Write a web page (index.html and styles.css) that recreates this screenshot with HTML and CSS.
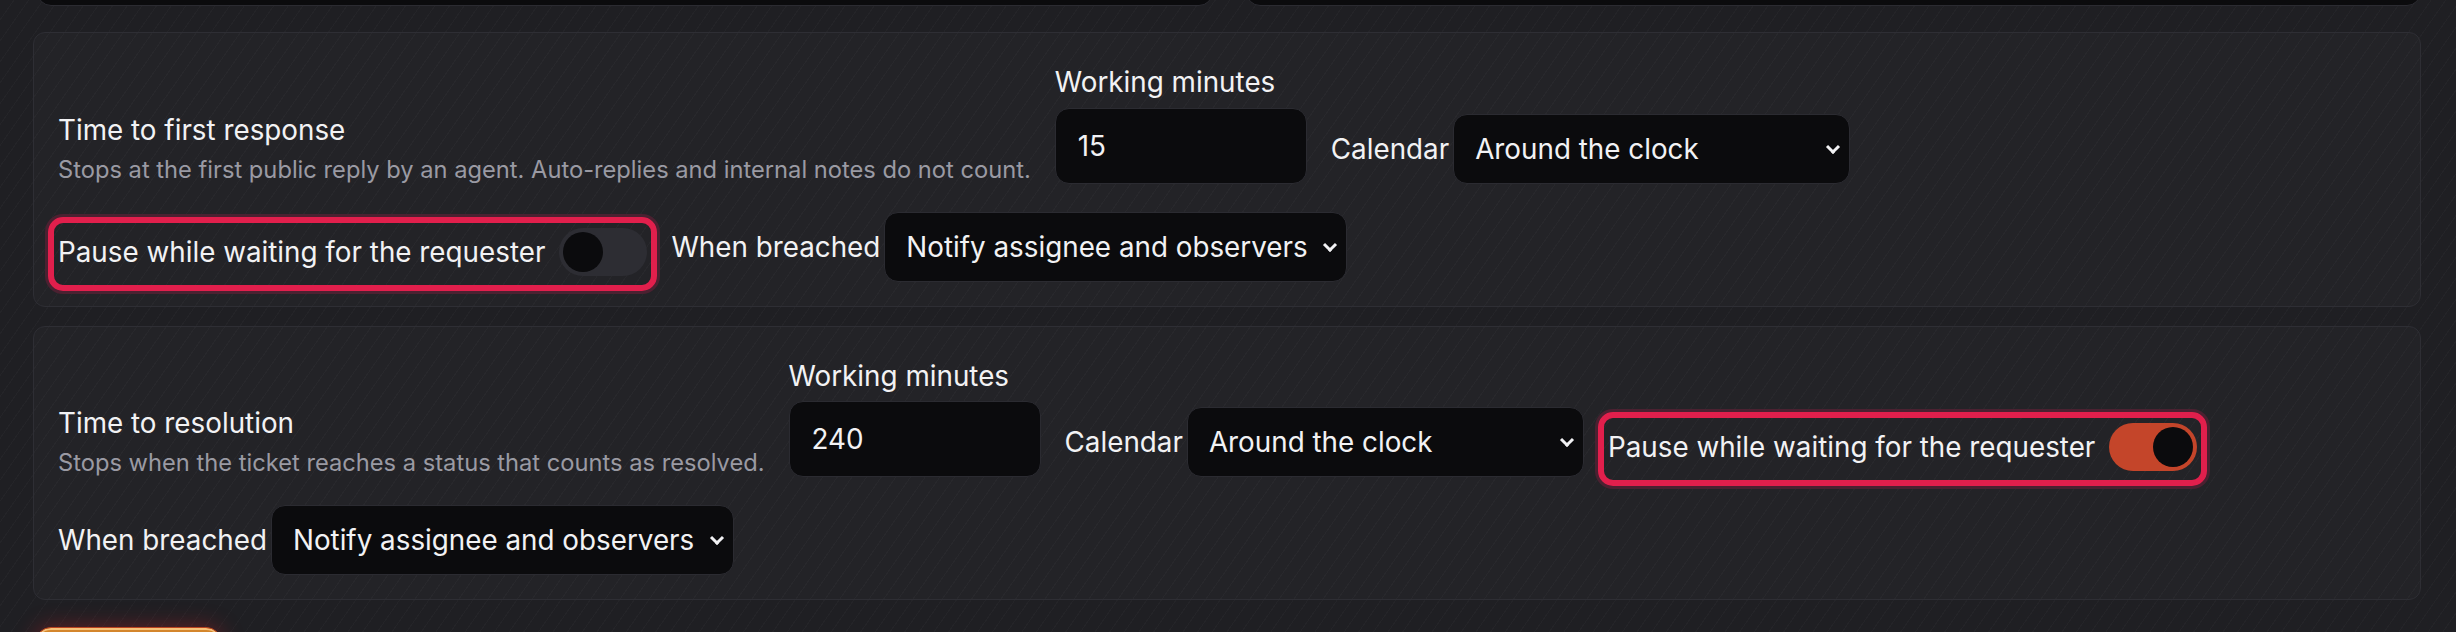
FILE: index.html
```html
<!DOCTYPE html>
<html lang="en">
<head>
  <meta charset="UTF-8" />
  <meta name="viewport" content="width=device-width, initial-scale=1.0"/>
  <title>SLA targets</title>
  <link rel="stylesheet" href="styles.css">
</head>
<body>

  <!-- Policy fields from the section above -->
  <div class="policy-fields">
    <div class="dark-field"></div>
    <div class="dark-field"></div>
  </div>

  <div class="sla-list">

    <!-- First response target -->
    <section class="sla-card">
      <div class="sla-row">
        <div class="sla-info">
          <h3 class="sla-title">Time to first response</h3>
          <p class="sla-desc">Stops at the first public reply by an agent. Auto-replies and internal notes do not count.</p>
        </div>

        <div class="field">
          <label class="field-label" for="firstMinutes">Working minutes</label>
          <input class="text-input" id="firstMinutes" type="text" value="15" />
        </div>

        <div class="inline-field">
          <label for="firstCalendar">Calendar</label>
          <span class="select-wrap">
            <select class="select-calendar" id="firstCalendar">
              <option>Around the clock</option>
              <option>Business hours</option>
            </select>
          </span>
        </div>

        <label class="pause-toggle highlight">
          Pause while waiting for the requester
          <input class="switch" type="checkbox" />
        </label>

        <div class="inline-field">
          <label for="firstBreach">When breached</label>
          <span class="select-wrap">
            <select class="select-breach" id="firstBreach">
              <option>Notify assignee and observers</option>
              <option>Notify assignee</option>
              <option>Escalate to team lead</option>
            </select>
          </span>
        </div>
      </div>
    </section>

    <!-- Resolution target -->
    <section class="sla-card">
      <div class="sla-row">
        <div class="sla-info">
          <h3 class="sla-title">Time to resolution</h3>
          <p class="sla-desc">Stops when the ticket reaches a status that counts as resolved.</p>
        </div>

        <div class="field">
          <label class="field-label" for="resolveMinutes">Working minutes</label>
          <input class="text-input" id="resolveMinutes" type="text" value="240" />
        </div>

        <div class="inline-field">
          <label for="resolveCalendar">Calendar</label>
          <span class="select-wrap">
            <select class="select-calendar" id="resolveCalendar">
              <option>Around the clock</option>
              <option>Business hours</option>
            </select>
          </span>
        </div>

        <label class="pause-toggle highlight">
          Pause while waiting for the requester
          <input class="switch" type="checkbox" checked />
        </label>

        <div class="inline-field">
          <label for="resolveBreach">When breached</label>
          <span class="select-wrap">
            <select class="select-breach" id="resolveBreach">
              <option>Notify assignee and observers</option>
              <option>Notify assignee</option>
              <option>Escalate to team lead</option>
            </select>
          </span>
        </div>
      </div>
    </section>

  </div>

  <div class="actions">
    <button class="save-btn" aria-label="Save"></button>
  </div>

</body>
</html>
```

FILE: styles.css
```css
html {
  background-color: #1f1f23;
}

body {
  margin: 0;
  padding: 0 35px 40px 33px;
  background-color: #1f1f23;
  background-image: repeating-linear-gradient(125deg, transparent 0 11px, rgba(255, 255, 255, 0.022) 11px 12px);
  font-family: "Inter", "Noto Sans", sans-serif;
  color: #f2f2f4;
  overflow: hidden;
}

.policy-fields {
  display: grid;
  grid-template-columns: 1fr 1fr;
  gap: 33px;
  margin: -64px 0 0 4px;
}

.dark-field {
  height: 70px;
  box-sizing: border-box;
  background: #0b0b0d;
  border: 1px solid #2b2b31;
  border-radius: 14px;
}

.sla-list {
  display: flex;
  flex-direction: column;
  gap: 19px;
  margin-top: 26px;
}

.sla-card {
  border: 1px solid #2e2e34;
  border-radius: 12px;
  background: rgba(255, 255, 255, 0.018);
  padding: 29px 24px 24px;
}

.sla-row {
  display: flex;
  flex-wrap: wrap;
  align-items: flex-end;
  gap: 28px 24px;
}

.sla-title {
  margin: 0 0 8px;
  font-size: 27.8px;
  font-weight: 400;
  line-height: normal;
}

.sla-desc {
  margin: 0;
  font-size: 23.7px;
  line-height: normal;
  color: #9a9aa3;
}

.field-label {
  display: block;
  font-size: 27.8px;
  line-height: 1.5;
  margin-bottom: 4px;
}

.text-input,
select {
  box-sizing: border-box;
  background: #0b0b0d;
  border: 1px solid #2b2b31;
  border-radius: 14px;
  color: #f2f2f4;
  font-family: inherit;
  font-size: 27.8px;
  outline: none;
}

.text-input {
  width: 252px;
  height: 76px;
  padding: 0 22px;
}

.inline-field {
  display: flex;
  align-items: center;
  gap: 4px;
  font-size: 27.8px;
}

.select-wrap {
  position: relative;
  display: block;
}

/* chevron drawn over the right end of the select */
.select-wrap::after {
  content: "";
  position: absolute;
  right: 12px;
  top: 50%;
  width: 7px;
  height: 7px;
  margin-top: -7px;
  border-right: 3px solid #f2f2f4;
  border-bottom: 3px solid #f2f2f4;
  transform: rotate(45deg);
  pointer-events: none;
}

select {
  appearance: none;
  -webkit-appearance: none;
  height: 70px;
  padding: 0 30px 0 21px;
}

.select-calendar {
  width: 397px;
}

.select-breach {
  width: 463px;
}

.pause-toggle {
  position: relative;
  display: flex;
  align-items: center;
  gap: 14px;
  padding: 2px 0 6px;
  font-size: 27.8px;
}

.highlight::after {
  content: "";
  position: absolute;
  inset: -9px -10px;
  border: 6px solid #e11f4c;
  border-radius: 15px;
  box-shadow: 0 0 0 3px #4b2131;
  pointer-events: none;
}

.switch {
  appearance: none;
  -webkit-appearance: none;
  position: relative;
  flex: none;
  width: 88px;
  height: 48px;
  margin: 0;
  border-radius: 24px;
  background: #2d2d33;
  cursor: pointer;
}

.switch::before {
  content: "";
  position: absolute;
  top: 4px;
  left: 4px;
  width: 40px;
  height: 40px;
  border-radius: 50%;
  background: #0b0b0d;
}

.switch:checked {
  background: #c4452a;
}

.switch:checked::before {
  left: 44px;
}

.actions {
  margin-top: 27px;
}

.save-btn {
  display: block;
  width: 187px;
  height: 64px;
  margin-left: 2px;
  border: 1px solid #b9431f;
  border-radius: 16px;
  background: #d4862c;
  box-shadow: inset 0 2px 0 #f6c27a, 0 0 22px rgba(190, 30, 40, 0.45);
  cursor: pointer;
}
```
